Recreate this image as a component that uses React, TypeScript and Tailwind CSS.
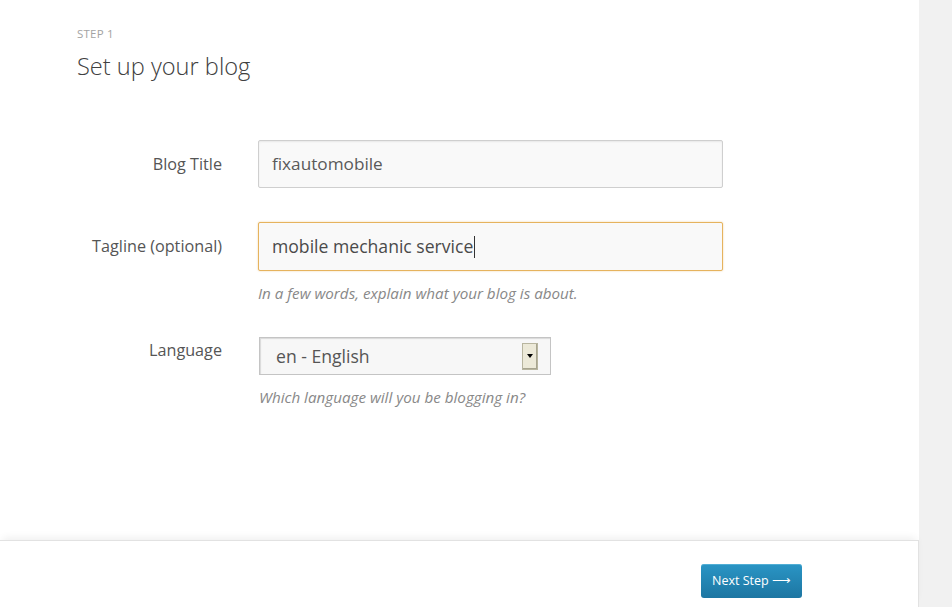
const font = { fontFamily: '"Open Sans", "Noto Sans", sans-serif' };

const Label = ({ children, top }: { children: React.ReactNode; top: string }) => (
	<div className={`w-[222px] shrink-0 text-right text-[16.2px] text-[#555] leading-[22px] ${top}`}>
		{children}
	</div>
);

const Hint = ({ children }: { children: React.ReactNode }) => (
	<p className="mt-[12px] text-[15.2px] italic leading-[20px] text-[#888]">{children}</p>
);

export default function App() {
	return (
		<div className="flex h-[607px] w-[952px] overflow-hidden bg-white text-[#444]" style={font}>
			<div className="flex w-[919px] shrink-0 flex-col bg-white">
				<div className="flex-1">
					<div className="pl-[77px] pt-[27px]">
						<div className="text-[11.5px] uppercase leading-[14px] tracking-[0.2px] text-[#a3a3a3]">Step 1</div>
						<h1 className="mt-[9px] text-[23.6px] font-light leading-[32px] text-[#404040]">Set up your blog</h1>
					</div>

					<div className="mt-[58px] flex flex-col">
						<div className="flex items-start">
							<Label top="pt-[13px]">Blog Title</Label>
							<div className="ml-[36px] flex h-[48px] w-[465px] items-center rounded-[2px] border border-[#cfcfcf] bg-[#f9f9f9] pl-[13px] text-[17.2px] text-[#5a5a5a] shadow-[inset_0_1px_2px_rgba(0,0,0,0.07)]">
								fixautomobile
							</div>
						</div>

						<div className="mt-[34px] flex items-start">
							<Label top="pt-[13px]">Tagline (optional)</Label>
							<div className="ml-[36px]">
								<div className="flex h-[49px] w-[465px] items-center rounded-[2px] border border-[#e6b35e] bg-[#f9f9f9] pl-[13px] text-[17.6px] text-[#4a4a4a] shadow-[0_0_2px_rgba(230,179,94,0.6)]">
									mobile mechanic service
									<span className="ml-[1px] inline-block h-[22px] w-[1px] bg-[#333]" />
								</div>
								<Hint>In a few words, explain what your blog is about.</Hint>
							</div>
						</div>

						<div className="mt-[34px] flex items-start">
							<Label top="pt-[2px]">Language</Label>
							<div className="ml-[37px]">
								<div className="flex h-[38px] w-[292px] items-center justify-between border border-[#c4c4c4] bg-[#f7f7f7] pl-[16px] pr-[12px] text-[17.6px] text-[#555] shadow-[inset_1px_1px_1px_rgba(0,0,0,0.12)]">
									en - English
									<span className="flex h-[27px] w-[16px] items-center justify-center border border-[#b8b59f] bg-[#ece9d8] shadow-[inset_-1px_-1px_0_#a7a48f]">
										<span className="h-0 w-0 border-x-[3.5px] border-t-[4px] border-x-transparent border-t-black" />
									</span>
								</div>
								<Hint>Which language will you be blogging in?</Hint>
							</div>
						</div>
					</div>
				</div>

				<div className="relative h-[67px] border-t border-r border-[#e2e2e2] bg-white shadow-[0_-5px_8px_-3px_rgba(0,0,0,0.07)]">
					<div className="flex justify-end pr-[116px] pt-[23px]">
						<button className="h-[34px] w-[101px] rounded-[3px] bg-gradient-to-b from-[#2a95c5] to-[#1d76a2] text-[12.5px] text-white shadow-[inset_0_1px_0_rgba(120,200,230,0.5)]">
							Next Step ⟶
						</button>
					</div>
				</div>
			</div>
			<div className="flex-1 bg-[#f1f1f1]" />
		</div>
	);
}
